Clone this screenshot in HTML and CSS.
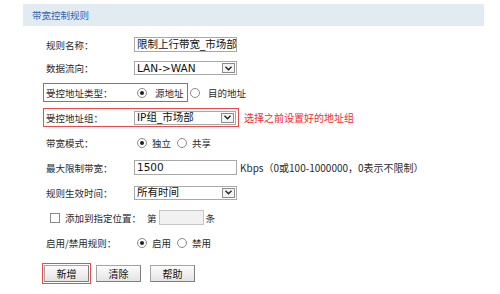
FILE: index.html
```html
<!DOCTYPE html>
<html lang="zh-CN">
<head>
<meta charset="utf-8">
<title>带宽控制规则</title>
<link rel="stylesheet" href="styles.css">
</head>
<body>
<div class="title">带宽控制规则</div>
<div class="form">
  <div class="row r1">
    <span class="label">规则名称：</span>
    <div class="field"><span class="val">限制上行带宽_市场部</span></div>
  </div>
  <div class="row r2">
    <span class="label">数据流向：</span>
    <div class="field select"><span class="val">LAN-&gt;WAN</span><span class="arrow"><svg width="7" height="5" viewBox="0 0 7 5"><polyline points="0.5,0.8 3.5,3.8 6.5,0.8" fill="none" stroke="#222" stroke-width="1.4"/></svg></span></div>
  </div>
  <div class="row">
    <div class="hl hl1">
      <span class="label">受控地址类型：</span>
      <span class="radio on"></span><span class="rtext wide">源地址</span>
    </div>
    <span class="radio r2nd"></span><span class="rtext wide">目的地址</span>
  </div>
  <div class="row">
    <div class="hl hl2">
      <span class="label">受控地址组：</span>
      <div class="field select"><span class="val">IP组_市场部</span><span class="arrow"><svg width="7" height="5" viewBox="0 0 7 5"><polyline points="0.5,0.8 3.5,3.8 6.5,0.8" fill="none" stroke="#222" stroke-width="1.4"/></svg></span></div>
    </div>
    <span class="note">选择之前设置好的地址组</span>
  </div>
  <div class="row">
    <span class="label">带宽模式：</span>
    <span class="radio on"></span><span class="rtext">独立</span>
    <span class="radio r2b"></span><span class="rtext">共享</span>
  </div>
  <div class="row">
    <span class="label">最大限制带宽：</span>
    <div class="field"><span class="val">1500</span></div>
    <span class="unit">Kbps（0或100-1000000，0表示不限制）</span>
  </div>
  <div class="row">
    <span class="label">规则生效时间：</span>
    <div class="field select"><span class="val">所有时间</span><span class="arrow"><svg width="7" height="5" viewBox="0 0 7 5"><polyline points="0.5,0.8 3.5,3.8 6.5,0.8" fill="none" stroke="#222" stroke-width="1.4"/></svg></span></div>
  </div>
  <div class="row">
    <div class="chkpart"><span class="check"></span><span class="chktext">添加到指定位置：</span></div>
    <span>第</span><span class="small-input"></span><span class="after">条</span>
  </div>
  <div class="row">
    <span class="label">启用/禁用规则：</span>
    <span class="radio on"></span><span class="rtext">启用</span>
    <span class="radio r2b"></span><span class="rtext">禁用</span>
  </div>
  <div class="buttons">
    <div class="hlbtn"><button class="btn">新增</button></div>
    <button class="btn b2">清除</button>
    <button class="btn b3">帮助</button>
  </div>
</div>
</body>
</html>
```

FILE: styles.css
```css
* { box-sizing: border-box; }
body {
  margin: 0;
  background: #fff;
  font-family: "Noto Sans CJK SC", "Noto Sans", sans-serif;
  font-size: 9.5px;
  line-height: 12px;
  color: #2a2a2a;
}
.title {
  margin: 4px 0 0 23px;
  width: 461px;
  height: 22px;
  background: #e3ebf2;
  color: #2f66b3;
  padding-left: 9px;
  display: flex;
  align-items: center;
}
.form { padding: 7px 0 0 43px; }
.row {
  display: flex;
  align-items: center;
  height: 25px;
  white-space: nowrap;
}
.r1 { height: 23px; }
.r2 { height: 24px; }
.label {
  width: 91px;
  padding-left: 3px;
  flex: none;
}
.hl {
  display: flex;
  align-items: center;
  height: 19px;
  border: 1px solid #ec4b4b;
  flex: none;
}
.hl .label { width: 90px; padding-left: 2px; }
.hl1 { width: 145px; }
.hl2 { width: 196px; }
.field {
  width: 103px;
  height: 15px;
  border: 1px solid #a9a9a9;
  background: #fff;
  display: flex;
  align-items: center;
  padding-left: 2px;
  flex: none;
  font-family: "DejaVu Sans", "Noto Sans CJK SC", sans-serif;
  font-size: 10.5px;
  color: #111;
}
.val { line-height: 12px; flex: 1; white-space: nowrap; margin-top: -1px; }
.select { height: 14px; padding-right: 1px; }
.hl2 .select { width: 102px; }
.arrow {
  width: 13px;
  height: 10px;
  border: 1px solid #8c8c8c;
  background: #f3f3f3;
  display: flex;
  align-items: center;
  justify-content: center;
  flex: none;
}
.radio {
  width: 10px;
  height: 10px;
  border: 1px solid #8a8a8a;
  border-radius: 50%;
  background: #fff;
  margin-left: 3px;
  display: flex;
  align-items: center;
  justify-content: center;
  flex: none;
}
.radio.on::after {
  content: "";
  width: 4px;
  height: 4px;
  border-radius: 50%;
  background: #222;
}
.rtext { margin-left: 5px; }
.rtext.wide { margin-left: 8px; }
.r2nd { margin-left: 2px; }
.r2b { margin-left: 6px; }
.note {
  margin-left: 5px;
  color: #f02b2b;
  font-size: 10px;
}
.unit { margin-left: 3px; font-size: 10px; }
.chkpart {
  width: 104px;
  display: flex;
  align-items: center;
  padding-left: 7px;
  flex: none;
}
.check {
  width: 10px;
  height: 10px;
  border: 1px solid #8a8a8a;
  background: #fff;
  flex: none;
}
.chktext { margin-left: 5px; }
.small-input {
  width: 45px;
  height: 15px;
  margin-left: 2px;
  border: 1px solid #c6c6c6;
  background: #f1f1f1;
  flex: none;
}
.after { margin-left: 2px; }
.buttons {
  display: flex;
  align-items: center;
  margin-top: 8px;
}
.hlbtn {
  border: 1px solid #ec4b4b;
  padding: 1px;
  margin-left: -1px;
  display: flex;
}
.btn {
  width: 45px;
  height: 17px;
  margin: 0;
  padding: 0;
  font-family: "Noto Sans CJK SC", sans-serif;
  font-size: 10px;
  line-height: 14px;
  color: #111;
  background: linear-gradient(#fbfbfb, #e4e4e4);
  border: 1px solid #a4a4a4;
  border-right-color: #7d7d7d;
  border-bottom-color: #7d7d7d;
}
.b2 { margin-left: 5px; }
.b3 { margin-left: 9px; }
```
